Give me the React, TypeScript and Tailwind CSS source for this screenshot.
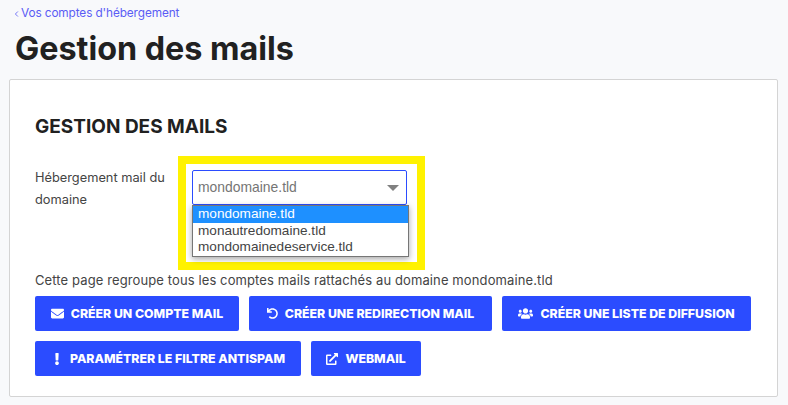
import React from 'react';
import { FaEnvelope, FaUndo, FaUsers, FaExclamation, FaExternalLinkAlt } from 'react-icons/fa';
import { ChevronLeft } from 'lucide-react';

const MailButton = ({ icon, label, width }: { icon: React.ReactNode; label: string; width: string }) => (
  <button className={`flex h-[35px] items-center justify-center gap-[7px] rounded-[2px] bg-[#2b4cff] text-[12.3px] font-extrabold text-white ${width}`}>
    {icon}
    <span className="pt-[2px]">{label}</span>
  </button>
);

const App = () => {
  return (
    <div className="h-[405px] w-[788px] overflow-hidden bg-[#f8f9fb] font-['Inter',sans-serif] text-[#212121]">
      {/* Breadcrumb and title */}
      <div className="flex h-[27px] items-center pl-[12px] pt-[1px] text-[11.8px] tracking-[-0.1px] text-[#5a5cf5]">
        <ChevronLeft className="h-[12px] w-[9px]" strokeWidth={2.2} />
        Vos comptes d'hébergement
      </div>
      <h1 className="ml-[15px] h-[52px] text-[32.3px] leading-[44px] font-bold">Gestion des mails</h1>

      {/* Main card */}
      <div className="ml-[9px] h-[318px] w-[769px] rounded-[2px] border border-[#d4d4d4] bg-white pl-[25px]">
        <h2 className="mt-[36px] text-[19px] leading-[22px] font-bold">GESTION DES MAILS</h2>

        <div className="mt-[18px] flex">
          <label className="w-[143px] pt-[11px] text-[12.8px] leading-[22px] text-[#444]">
            Hébergement mail du<br />domaine
          </label>
          <div className="h-[114px] w-[247px] border-[8px] border-[#fff200] pl-[6px] pt-[6px]">
            <div className="flex h-[35px] w-[215px] items-center justify-between rounded-[2px] border border-[#2b4cff] pl-[5px] pr-[7px] font-['Liberation_Sans',sans-serif] text-[13.9px] text-[#757575]">
              mondomaine.tld
              <span className="h-0 w-0 border-x-[6px] border-t-[6px] border-x-transparent border-t-[#808080]" />
            </div>
            <div className="w-[217px] border border-[#767676] bg-white font-['Liberation_Sans',sans-serif] text-[13.6px] leading-[16.5px] text-[#444] shadow-[0_2px_6px_rgba(0,0,0,0.35)]">
              <div className="bg-[#1e90ff] pl-[5px] text-white">mondomaine.tld</div>
              <div className="pl-[5px]">monautredomaine.tld</div>
              <div className="pl-[5px]">mondomainedeservice.tld</div>
            </div>
          </div>
        </div>

        <p className="mt-[1px] text-[13px] leading-[18px] tracking-[0.11px] text-[#444]">
          Cette page regroupe tous les comptes mails rattachés au domaine mondomaine.tld
        </p>

        {/* Actions */}
        <div className="mt-[7px] flex flex-wrap gap-x-[10px] gap-y-[10px]">
          <MailButton width="w-[204px]" icon={<FaEnvelope className="h-[13px] w-[13px]" />} label="CRÉER UN COMPTE MAIL" />
          <MailButton width="w-[243px]" icon={<FaUndo className="h-[11px] w-[11px]" />} label="CRÉER UNE REDIRECTION MAIL" />
          <MailButton width="w-[249px]" icon={<FaUsers className="h-[15px] w-[15px]" />} label="CRÉER UNE LISTE DE DIFFUSION" />
          <MailButton width="w-[266px]" icon={<FaExclamation className="h-[12px] w-[12px]" />} label="PARAMÉTRER LE FILTRE ANTISPAM" />
          <MailButton width="w-[110px]" icon={<FaExternalLinkAlt className="h-[12px] w-[12px]" />} label="WEBMAIL" />
        </div>
      </div>
    </div>
  );
};

export default App;
